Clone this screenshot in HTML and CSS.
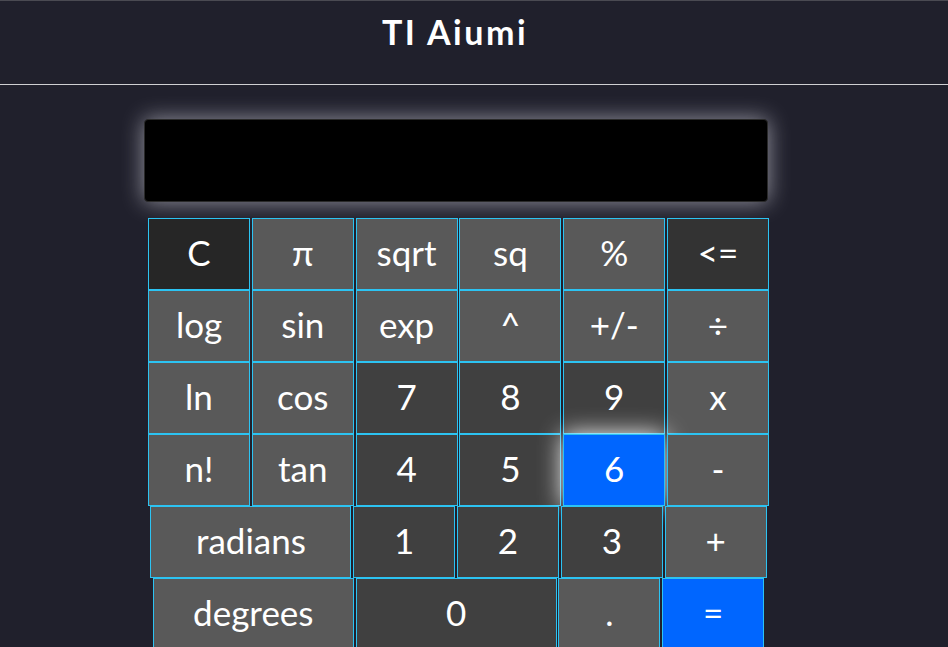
FILE: index.html
```html
<!DOCTYPE html>
<html>
<head>
<meta charset="utf-8">
<link rel="stylesheet" href="styles.css">
</head>
<body>
<header class="topbar">
  <h1 class="title">TI Aiumi</h1>
</header>
<main class="calc">
  <div class="display"></div>
  <div class="keypad">
    <div class="row">
      <button class="key key-dark">C</button>
      <button class="key">π</button>
      <button class="key">sqrt</button>
      <button class="key">sq</button>
      <button class="key">%</button>
      <button class="key key-mid">&lt;=</button>
    </div>
    <div class="row">
      <button class="key">log</button>
      <button class="key">sin</button>
      <button class="key">exp</button>
      <button class="key">^</button>
      <button class="key">+/-</button>
      <button class="key">÷</button>
    </div>
    <div class="row">
      <button class="key">ln</button>
      <button class="key">cos</button>
      <button class="key key-num">7</button>
      <button class="key key-num">8</button>
      <button class="key key-num">9</button>
      <button class="key">x</button>
    </div>
    <div class="row">
      <button class="key">n!</button>
      <button class="key">tan</button>
      <button class="key key-num">4</button>
      <button class="key key-num">5</button>
      <button class="key key-blue key-hover">6</button>
      <button class="key">-</button>
    </div>
    <div class="row">
      <button class="key key-wide">radians</button>
      <button class="key key-num">1</button>
      <button class="key key-num">2</button>
      <button class="key key-num">3</button>
      <button class="key">+</button>
    </div>
    <div class="row">
      <button class="key key-wide">degrees</button>
      <button class="key key-num key-wide">0</button>
      <button class="key">.</button>
      <button class="key key-blue">=</button>
    </div>
  </div>
</main>
</body>
</html>
```

FILE: styles.css
```css
html, body {
  margin: 0;
  padding: 0;
  background: #20202c;
  font-family: "Lato", "Noto Sans", sans-serif;
  color: #fff;
  overflow: hidden;
}

.topbar {
  height: 83px;
  border-top: 1px solid #4a4a52;
  border-bottom: 1px solid #cfcfd2;
  display: flex;
  justify-content: center;
  padding-right: 38px;
}

.title {
  margin: 0;
  padding-top: 11px;
  font-size: 34px;
  font-weight: 700;
  letter-spacing: 2.5px;
  line-height: 40px;
}

.calc {
  padding-top: 34px;
}

.display {
  margin-left: 144px;
  width: 622px;
  height: 81px;
  background: #000;
  border: 1px solid #2a2a2a;
  border-radius: 4px;
  box-shadow: 0 0 22px rgba(230, 230, 240, 0.6);
}

.keypad {
  margin-top: 16px;
  margin-left: 148px;
  width: 621px;
  display: flex;
  flex-direction: column;
}

.row {
  display: flex;
  justify-content: center;
  gap: 1.8px;
}

.key {
  box-sizing: border-box;
  width: 102px;
  height: 72px;
  margin: 0;
  padding: 0 0 3px;
  border: 1px solid #2cc3f2;
  background: #595959;
  color: #fff;
  font-family: inherit;
  font-size: 35px;
  line-height: 1;
  flex: none;
}

.key-wide {
  width: 201px;
}

.key-dark {
  background: #262626;
}

.key-mid {
  background: #333333;
}

.key-num {
  background: #404040;
}

.key-blue {
  background: #0066ff;
}

.key-hover {
  box-shadow: 0 0 24px #ffffff;
}
```
